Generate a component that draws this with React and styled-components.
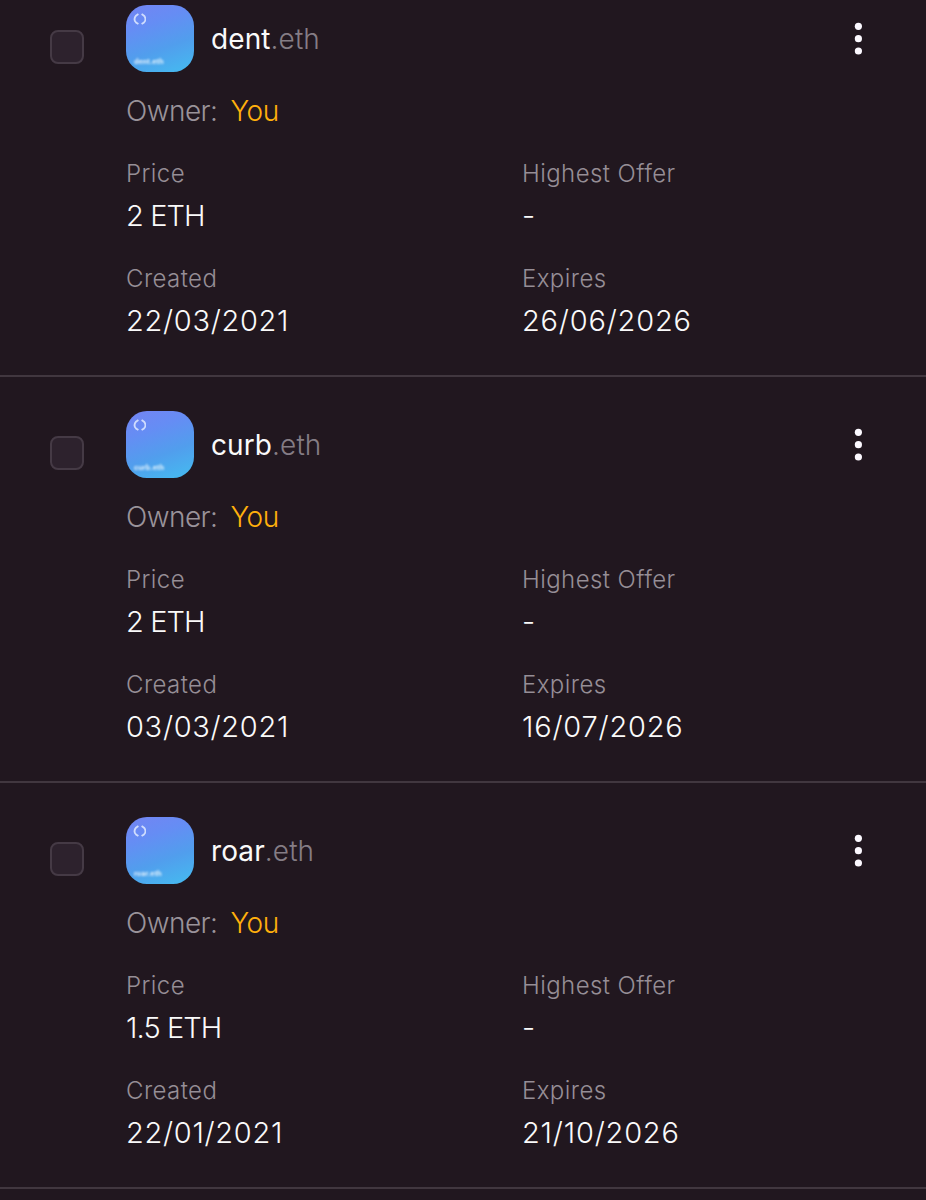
import React from 'react';
import styled, { createGlobalStyle } from 'styled-components';

const domains = [
    { name: 'dent', price: '2 ETH', offer: '-', created: '22/03/2021', expires: '26/06/2026' },
    { name: 'curb', price: '2 ETH', offer: '-', created: '03/03/2021', expires: '16/07/2026' },
    { name: 'roar', price: '1.5 ETH', offer: '-', created: '22/01/2021', expires: '21/10/2026' },
];

const GlobalStyle = createGlobalStyle`
    * {
        box-sizing: border-box;
    }
    body {
        margin: 0;
        background-color: #21171f;
        color: #fafafa;
        font-family: Inter, Roboto, sans-serif;
        font-weight: 300;
    }
`;
const Viewport = styled.main`
    height: 1200px;
    overflow: hidden;
`;
// the list is scrolled a little past the top of the first row
const List = styled.ul`
    list-style: none;
    margin: -29px 0 0;
    padding: 0;
`;
const Item = styled.li`
    display: grid;
    grid-template-columns: 34px 1fr;
    column-gap: 42px;
    height: 406px;
    padding: 34px 8px 0 50px;
    border-bottom: 2px solid #41373f;
`;
const Checkbox = styled.button`
    width: 34px;
    height: 34px;
    margin: 25px 0 0;
    padding: 0;
    border: 2px solid #453a45;
    border-radius: 8px;
    background-color: #2d222d;
`;
const Header = styled.div`
    display: flex;
    align-items: center;
    height: 68px;
`;
const Avatar = styled.div`
    display: flex;
    flex-direction: column;
    justify-content: space-between;
    width: 68px;
    height: 67px;
    margin-bottom: 1px;
    padding: 7px 8px 5px;
    border-radius: 21px;
    background: linear-gradient(160deg, #7484f3 0%, #658df4 30%, #519eed 62%, #44bcf0 100%);
`;
const Logo = styled.svg`
    display: block;
    width: 13px;
    height: 14px;
    margin-left: -1px;
    filter: blur(0.5px);
`;
const AvatarLabel = styled.span`
    color: rgba(255, 255, 255, 0.85);
    font-size: 7px;
    font-weight: 700;
    line-height: 10px;
    letter-spacing: 0.1px;
    filter: blur(0.8px);
`;
const Name = styled.h2`
    flex: 1;
    margin: 0 0 0 17px;
    font-size: 28px;
    font-weight: 400;
    line-height: 38px;
    letter-spacing: 0.1px;
`;
const Suffix = styled.span`
    color: #857d85;
    font-weight: 300;
`;
const MenuButton = styled.button`
    display: flex;
    margin: 0 56px 0 0;
    padding: 0;
    border: 0;
    background: none;
`;
const Owner = styled.p`
    display: flex;
    gap: 13px;
    margin: 20px 0 0;
    color: #9a939a;
    font-size: 28px;
    line-height: 36px;
    letter-spacing: -0.55px;
`;
const You = styled.span`
    color: #ffb00c;
    letter-spacing: -0.4px;
`;
const Details = styled.dl`
    display: grid;
    grid-template-columns: 396px 1fr;
    row-gap: 21px;
    margin: 27px 0 0;
`;
const Label = styled.dt`
    color: #968e96;
    font-size: 24px;
    line-height: 36px;
    letter-spacing: 0.42px;
`;
const Value = styled.dd`
    margin: 5px 0 5px;
    font-size: 29px;
    line-height: 38px;
    letter-spacing: ${props => props.$spacing};
`;

const EnsLogo = () => (
    <Logo viewBox="0 0 13 14" fill="none" stroke="#dbe6ff" strokeWidth="1.8" opacity="0.9">
        <path d="M5.4 2.1 3 3.7C1.2 5.8 1.3 8.6 3 10.5l2.4 1.6" />
        <path d="M8.6 2.1 11 3.7c1.8 2.1 1.7 4.9 0 6.8l-2.4 1.6" />
    </Logo>
);

const DotsIcon = () => (
    <svg width="8" height="34" viewBox="0 0 8 34" fill="#fcf9ff">
        <circle cx="4.4" cy="4.3" r="3.6" />
        <circle cx="4.4" cy="16.7" r="3.6" />
        <circle cx="4.4" cy="29" r="3.6" />
    </svg>
);

const Detail = ({ label, value, spacing = '0' }) => (
    <div>
        <Label>{label}</Label>
        <Value $spacing={spacing}>{value}</Value>
    </div>
);

const DomainItem = ({ domain }) => (
    <Item>
        <Checkbox role="checkbox" aria-checked="false" aria-label={domain.name} />
        <div>
            <Header>
                <Avatar>
                    <EnsLogo />
                    <AvatarLabel>{domain.name}.eth</AvatarLabel>
                </Avatar>
                <Name>{domain.name}<Suffix>.eth</Suffix></Name>
                <MenuButton aria-label="More">
                    <DotsIcon />
                </MenuButton>
            </Header>
            <Owner>Owner: <You>You</You></Owner>
            <Details>
                <Detail label="Price" value={domain.price} spacing="-0.9px" />
                <Detail label="Highest Offer" value={domain.offer} />
                <Detail label="Created" value={domain.created} spacing="0.7px" />
                <Detail label="Expires" value={domain.expires} spacing="0.8px" />
            </Details>
        </div>
    </Item>
);

const App = () => {
    return (
        <Viewport>
            <GlobalStyle />
            <List>
                {domains.map(domain => (
                    <DomainItem key={domain.name} domain={domain} />
                ))}
            </List>
        </Viewport>
    );
};

export default App;
